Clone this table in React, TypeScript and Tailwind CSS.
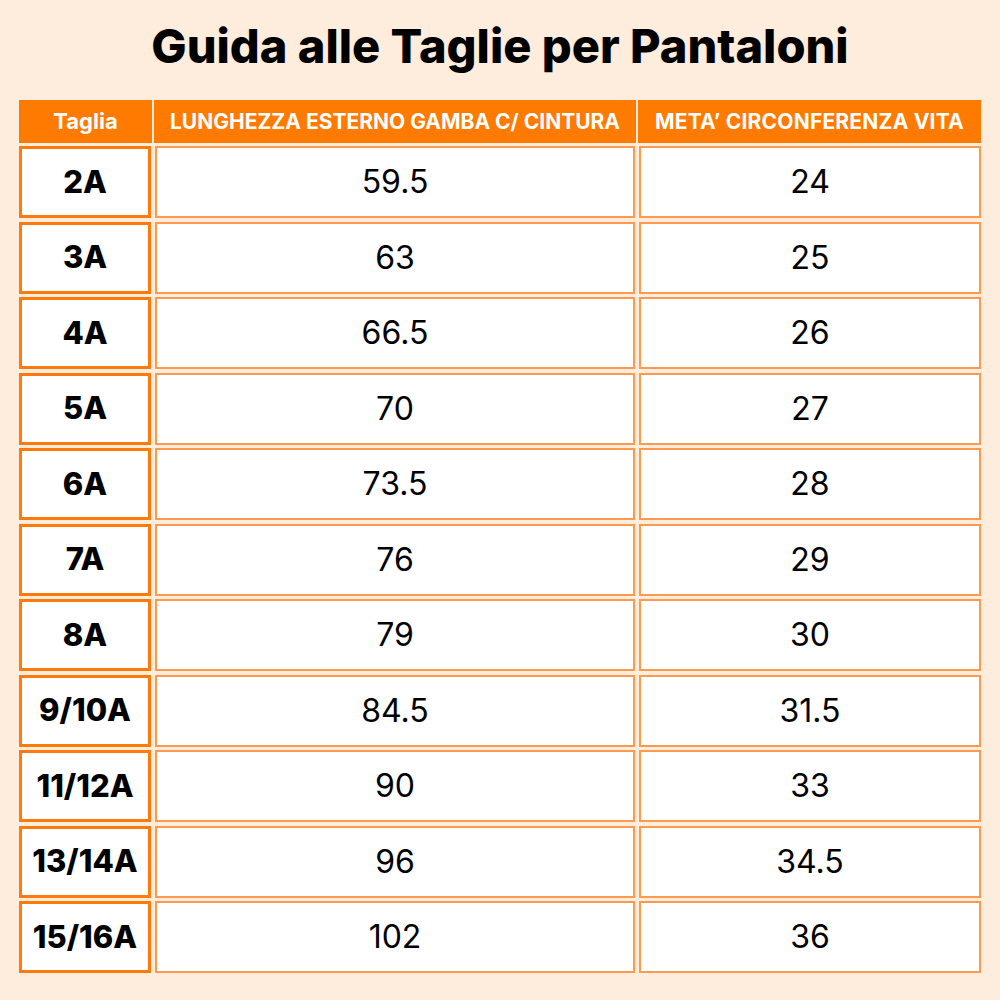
import React from "react";

const rows: [string, string, string][] = [
  ["2A", "59.5", "24"],
  ["3A", "63", "25"],
  ["4A", "66.5", "26"],
  ["5A", "70", "27"],
  ["6A", "73.5", "28"],
  ["7A", "76", "29"],
  ["8A", "79", "30"],
  ["9/10A", "84.5", "31.5"],
  ["11/12A", "90", "33"],
  ["13/14A", "96", "34.5"],
  ["15/16A", "102", "36"],
];

export default function App() {
  return (
    <div
      className="w-[1000px] h-[1000px] bg-[#feecdd] flex flex-col items-center"
      style={{ fontFamily: "Inter, 'Noto Sans', sans-serif" }}
    >
      <h1 className="mt-[17px] h-[56px] flex items-center text-[47px] font-extrabold text-black tracking-[0px] leading-none">
        Guida alle Taglie per Pantaloni
      </h1>
      <div className="mt-[27px] w-[962px] flex flex-col">
        <div className="grid grid-cols-[133px_482px_343px] gap-x-[2px] h-[43px]">
          <div className="bg-[#ff7a00] text-white font-bold text-[22px] flex items-center justify-center">
            Taglia
          </div>
          <div className="bg-[#ff7a00] text-white font-bold text-[21px] flex items-center justify-center">
            LUNGHEZZA ESTERNO GAMBA C/ CINTURA
          </div>
          <div className="bg-[#ff7a00] text-white font-bold text-[21px] flex items-center justify-center tracking-[0.2px]">
            META’ CIRCONFERENZA VITA
          </div>
        </div>
        <div className="mt-[3px] grid grid-cols-[132px_480px_342px] gap-x-[4px] gap-y-[3.5px]">
          {rows.map(([t, a, b]) => (
            <React.Fragment key={t}>
              <div className="h-[72px] bg-white border-[3.5px] border-[#ff7a0a] flex items-center justify-center text-[31px] font-extrabold text-black">
                {t}
              </div>
              <div className="h-[72px] bg-white border-2 border-[#fd9a4f] flex items-center justify-center text-[32px] text-black">
                {a}
              </div>
              <div className="h-[72px] bg-white border-2 border-[#fd9a4f] flex items-center justify-center text-[32px] text-black">
                {b}
              </div>
            </React.Fragment>
          ))}
        </div>
      </div>
    </div>
  );
}
